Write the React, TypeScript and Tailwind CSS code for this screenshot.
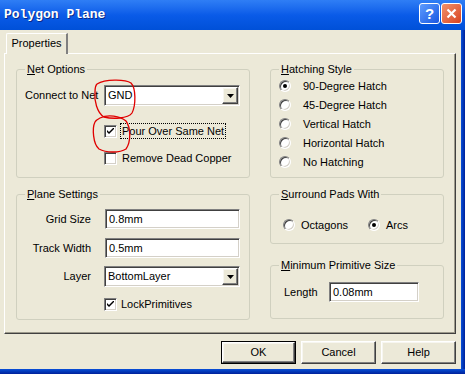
import React from "react";

const face = "bg-[#ECE9D8]";
const sunken =
  "border border-t-[#808080] border-l-[#808080] border-b-white border-r-white shadow-[inset_1px_1px_0_#404040,inset_-1px_-1px_0_#d4d0c8]";
const raised =
  "border border-t-white border-l-white border-b-[#404040] border-r-[#404040] shadow-[inset_-1px_-1px_0_#808080,inset_1px_1px_0_#f7f6f0]";

function Mn({ k, rest }: { k: string; rest: string }) {
  return (
    <>
      <span className="underline underline-offset-[1px]">{k}</span>
      {rest}
    </>
  );
}

function Group({
  title,
  className,
  children,
}: {
  title: React.ReactNode;
  className?: string;
  children?: React.ReactNode;
}) {
  return (
    <fieldset className={`border border-[#D0D0BF] rounded-[3px] ${className ?? ""}`}>
      <legend className="ml-[8px] px-[2px] leading-[13px]">{title}</legend>
      {children}
    </fieldset>
  );
}

function Check({ checked }: { checked?: boolean }) {
  return (
    <span className={`w-[13px] h-[13px] bg-white flex items-center justify-center shrink-0 ${sunken}`}>
      {checked && (
        <svg width="7" height="7" viewBox="0 0 7 7">
          <path d="M0 2 L0 4 L2 6 L7 1 L7 -1 L2 4 Z" fill="#000" />
        </svg>
      )}
    </span>
  );
}

function Radio({ checked }: { checked?: boolean }) {
  return (
    <span className="w-[12px] h-[12px] rounded-full bg-white border border-t-[#808080] border-l-[#808080] border-b-white border-r-white shadow-[inset_1px_1px_0_#404040,inset_-1px_-1px_0_#d4d0c8] flex items-center justify-center shrink-0">
      {checked && <span className="w-[4px] h-[4px] rounded-full bg-black" />}
    </span>
  );
}

function Field({ value, w }: { value: string; w: string }) {
  return (
    <div className={`${w} h-[20px] bg-white flex items-center pl-[3px] ${sunken}`}>
      <span className="leading-none">{value}</span>
    </div>
  );
}

function Combo({ value }: { value: string }) {
  return (
    <div className={`w-[136px] h-[21px] bg-white flex items-center pl-[3px] ${sunken}`}>
      <span className="flex-1 leading-none">{value}</span>
      <span className={`w-[16px] h-[17px] mr-[1px] ${face} ${raised} flex items-center justify-center`}>
        <svg width="7" height="4" viewBox="0 0 7 4">
          <path d="M0 0 H7 L3.5 4 Z" fill="#000" />
        </svg>
      </span>
    </div>
  );
}

function Button({ label, primary }: { label: string; primary?: boolean }) {
  const inner = (
    <div className={`w-full h-full ${face} ${raised} flex items-center justify-center`}>{label}</div>
  );
  return primary ? (
    <div className="w-[75px] h-[23px] border border-black">{inner}</div>
  ) : (
    <div className="w-[75px] h-[23px]">{inner}</div>
  );
}

export default function App() {
  return (
    <div className="relative w-[465px] h-[374px] overflow-hidden flex flex-col text-[11px] text-black font-['Liberation_Sans',Arial,sans-serif]">
      {/* title bar */}
      <div className="h-[30px] shrink-0 flex items-center pl-[4px] pr-[3px] bg-gradient-to-b from-[#2f7ef5] via-[#0a5be8] to-[#0050d8]">
        <span className="text-white font-bold text-[13px] font-['Liberation_Mono',monospace] [text-shadow:1px_1px_0_#0a2a8a]">
          Polygon Plane
        </span>
        <div className="ml-auto flex gap-[1px] mb-[4px]">
          <div className="w-[21px] h-[21px] rounded-[3px] border border-white bg-gradient-to-br from-[#5d9cff] to-[#1a55e0] flex items-center justify-center text-white font-bold text-[15px] leading-none font-['Liberation_Sans',sans-serif]">
            ?
          </div>
          <div className="w-[21px] h-[21px] rounded-[3px] border border-white bg-gradient-to-br from-[#f0906a] to-[#d8401c] flex items-center justify-center">
            <svg width="11" height="11" viewBox="0 0 11 11">
              <path d="M1.5 1.5 L9.5 9.5 M9.5 1.5 L1.5 9.5" stroke="#fff" strokeWidth="2.2" />
            </svg>
          </div>
        </div>
      </div>

      <div className="flex-1 flex">
        <div className={`flex-1 flex flex-col ${face}`}>
          {/* tab */}
          <div className="pt-[3px] pl-[6px] flex">
            <div className={`relative z-10 -mb-[1px] w-[62px] h-[21px] ${face} border-t border-l border-white border-r-2 border-r-[#808080] rounded-tl-[2px] flex items-center justify-center pb-[1px]`}>
              Properties
            </div>
          </div>

          {/* panel */}
          <div className="ml-[4px] w-[452px] h-[281px] border border-t-white border-l-white border-r-[#404040] border-b-[#404040] shadow-[inset_-1px_-1px_0_#9d9a8c] pl-[11px] pt-[9px] flex gap-[20px]">
            {/* left column */}
            <div className="w-[234px] flex flex-col gap-[10px]">
              <Group title={<Mn k="N" rest="et Options" />} className="h-[115px]">
                <div className="flex items-center mt-[9px]">
                  <span className="w-[87px] pl-[8px]">Connect to Net</span>
                  <Combo value="GND" />
                </div>
                <div className="flex items-center mt-[17px] ml-[87px] gap-[3px]">
                  <Check checked />
                  <span className="border border-dotted border-black px-[1px] leading-[14px]">
                    Pour Over Same Net
                  </span>
                </div>
                <div className="flex items-center mt-[11px] ml-[87px] gap-[5px]">
                  <Check />
                  <span>Remove Dead Copper</span>
                </div>
              </Group>
              <Group title={<Mn k="P" rest="lane Settings" />} className="h-[132px]">
                <div className="flex flex-col gap-[9px] mt-[8px]">
                  {[
                    ["Grid Size", "0.8mm"],
                    ["Track Width", "0.5mm"],
                  ].map(([l, v]) => (
                    <div key={l} className="flex items-center">
                      <span className="w-[88px] text-right pr-[14px]">{l}</span>
                      <Field value={v} w="w-[135px]" />
                    </div>
                  ))}
                  <div className="flex items-center -mt-[1px]">
                    <span className="w-[87px] text-right pr-[13px]">Layer</span>
                    <Combo value="BottomLayer" />
                  </div>
                </div>
                <div className="flex items-center mt-[9px] ml-[87px] gap-[4px]">
                  <Check checked />
                  <span>LockPrimitives</span>
                </div>
              </Group>
            </div>

            {/* right column */}
            <div className="w-[174px] flex flex-col">
              <Group title={<Mn k="H" rest="atching Style" />} className="h-[115px]">
                <div className="flex flex-col gap-[7px] mt-[4px] pl-[8px]">
                  {["90-Degree Hatch", "45-Degree Hatch", "Vertical Hatch", "Horizontal Hatch", "No Hatching"].map(
                    (t, i) => (
                      <div key={t} className="flex items-center gap-[12px] h-[12px]">
                        <Radio checked={i === 0} />
                        <span>{t}</span>
                      </div>
                    )
                  )}
                </div>
              </Group>
              <Group title={<Mn k="S" rest="urround Pads With" />} className="h-[56px] mt-[10px]">
                <div className="flex items-center mt-[16px] pl-[12px]">
                  <Radio />
                  <span className="ml-[6px] w-[67px]">Octagons</span>
                  <Radio checked />
                  <span className="ml-[6px]">Arcs</span>
                </div>
              </Group>
              <Group title={<Mn k="M" rest="inimum Primitive Size" />} className="h-[60px] mt-[15px]">
                <div className="flex items-center mt-[10px] pl-[13px]">
                  <span className="w-[45px]">Length</span>
                  <Field value="0.08mm" w="w-[90px]" />
                </div>
              </Group>
            </div>
          </div>

          {/* buttons */}
          <div className="mt-[7px] flex justify-end gap-[5px] pr-[5px]">
            <Button label="OK" primary />
            <Button label="Cancel" />
            <Button label="Help" />
          </div>
        </div>
        <div className="w-[4px] bg-gradient-to-r from-[#0a4fd8] to-[#00209a]" />
      </div>
      <div className="h-[5px] shrink-0 bg-gradient-to-b from-[#0a4fd8] to-[#00209a]" />

      {/* red annotation marks */}
      <svg className="absolute inset-0 pointer-events-none" width="465" height="374" viewBox="0 0 465 374">
        <path
          d="M97 84 C105 79 125 79 131 83 C136 88 136 105 132 113 C128 119 112 119 104 117 C97 113 94 100 95 92 C95 88 96 85 97 84"
          fill="none"
          stroke="#e00000"
          strokeWidth="1.3"
        />
        <path
          d="M100 118 C108 114 120 116 126 121 C131 128 131 142 126 149 C120 153 106 153 99 149 C93 144 92 128 95 122 C96 120 98 119 100 118"
          fill="none"
          stroke="#e00000"
          strokeWidth="1.3"
        />
      </svg>
    </div>
  );
}
